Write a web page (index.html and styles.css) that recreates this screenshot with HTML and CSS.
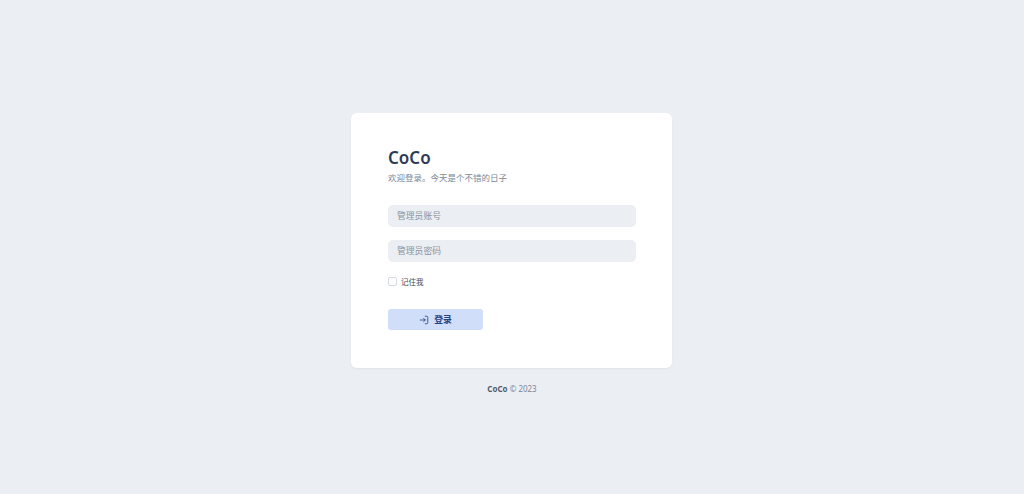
FILE: index.html
```html
<!DOCTYPE html>
<html lang="zh-CN">
<head>
    <meta charset="UTF-8">
    <meta name="viewport" content="width=device-width, initial-scale=1.0">
    <title>CoCo 登录</title>
    <link rel="stylesheet" href="styles.css">
</head>
<body>
    <div class="login-page">
        <!-- 登录卡片 -->
        <div class="login-card">
            <h1 class="brand">CoCo</h1>
            <p class="welcome">欢迎登录。今天是个不错的日子</p>
            <form class="login-form">
                <input class="field" type="text" placeholder="管理员账号">
                <input class="field" type="password" placeholder="管理员密码">
                <label class="remember">
                    <span class="check-box"></span>
                    <span>记住我</span>
                </label>
                <button class="login-btn" type="button">
                    <svg class="login-icon" viewBox="0 0 24 24" fill="none" stroke="currentColor" stroke-width="2" stroke-linecap="round" stroke-linejoin="round">
                        <path d="M15 3h3a3 3 0 0 1 3 3v12a3 3 0 0 1-3 3h-3"/>
                        <path d="M3 12h12"/>
                        <path d="M11 8l4 4-4 4"/>
                    </svg>
                    <span>登录</span>
                </button>
            </form>
        </div>
        <div class="footer"><strong>CoCo</strong> © 2023</div>
    </div>
</body>
</html>
```

FILE: styles.css
```css
* {
    margin: 0;
    padding: 0;
    box-sizing: border-box;
}

body {
    background: #ebeef3;
    font-family: "Noto Sans", "Noto Sans CJK SC", sans-serif;
    min-height: 100vh;
}

.login-page {
    display: flex;
    flex-direction: column;
    align-items: center;
    padding-top: 113px;
    padding-right: 1px;
}

/* 登录卡片 */
.login-card {
    width: 321px;
    height: 255px;
    padding: 33px 36px 0 37px;
    background: #fff;
    border-radius: 6px;
    box-shadow: 0 1px 2px rgba(30, 41, 59, 0.05);
}

.brand {
    font-size: 17px;
    line-height: 23px;
    font-weight: 600;
    color: #2f3b55;
}

.welcome {
    margin-top: 2px;
    font-size: 8.5px;
    line-height: 14px;
    color: #7c8796;
}

.login-form {
    display: flex;
    flex-direction: column;
    align-items: flex-start;
    margin-top: 20px;
}

.field {
    display: block;
    width: 248px;
    height: 22px;
    margin-bottom: 13px;
    padding: 0 9px;
    border: none;
    border-radius: 5px;
    background: #ebeef3;
    font-family: inherit;
    font-size: 8.8px;
    color: #2f3b55;
    outline: none;
}

.field::placeholder {
    color: #8a93a0;
    opacity: 1;
}

.remember {
    display: flex;
    align-items: center;
    gap: 4px;
    height: 12px;
    font-size: 7.5px;
    color: #3c4658;
}

.check-box {
    width: 9px;
    height: 9px;
    background: #fff;
    border: 1px solid #d5dae2;
    border-radius: 2px;
}

.login-btn {
    display: flex;
    align-items: center;
    justify-content: center;
    gap: 5px;
    width: 95px;
    height: 21px;
    margin-top: 22px;
    border: none;
    border-radius: 3px;
    background: #d1defa;
    color: #28407f;
    font-family: inherit;
    font-size: 8.8px;
    font-weight: 700;
}

.login-icon {
    width: 10px;
    height: 10px;
}

.footer {
    margin-top: 15px;
    margin-left: 1px;
    font-size: 8px;
    line-height: 12px;
    color: #7c8796;
}

.footer strong {
    color: #525c6b;
}
```
